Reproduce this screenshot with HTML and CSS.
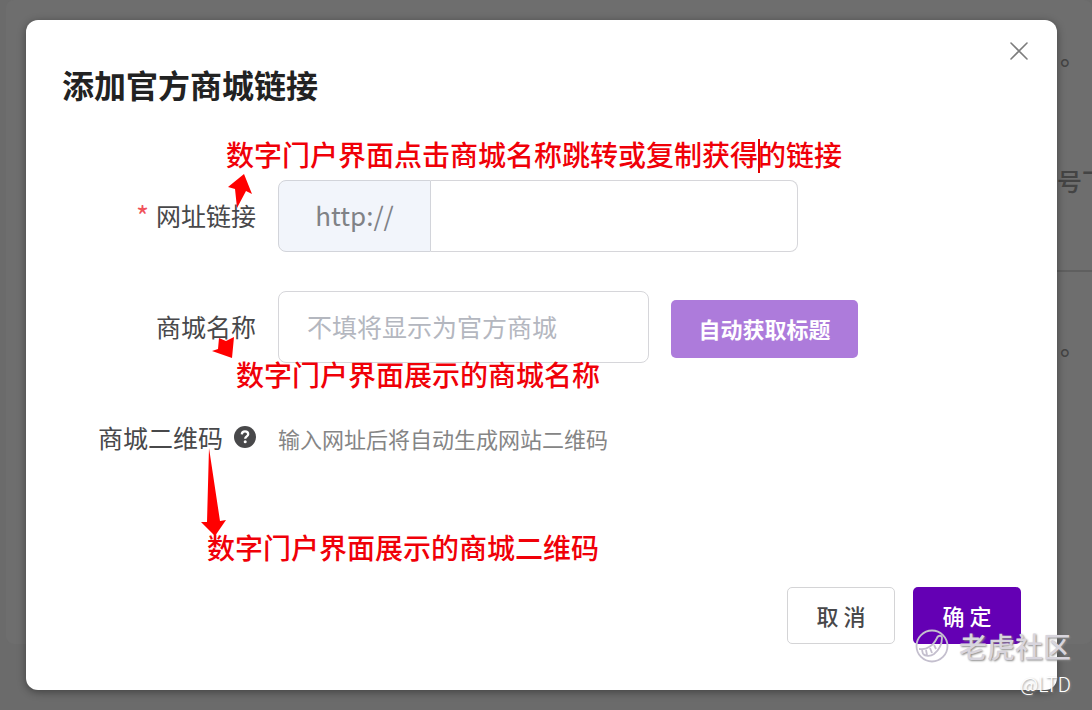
FILE: index.html
```html
<!DOCTYPE html>
<html lang="zh-CN">
<head>
<meta charset="utf-8">
<title>添加官方商城链接</title>
<link rel="stylesheet" href="styles.css">
</head>
<body>
<div class="backdrop" aria-hidden="true">
  <div class="backdrop-card">
    <p class="backdrop-line">。</p>
    <p class="backdrop-line backdrop-mid">号下</p>
    <p class="backdrop-line backdrop-last">。</p>
  </div>
</div>

<main class="dialog" role="dialog" aria-labelledby="title">
  <button class="close" type="button" aria-label="关闭">
    <svg width="20" height="20" viewBox="0 0 20 20"><path d="M2 2 18 18M18 2 2 18" fill="none" stroke="#7d7d7d" stroke-width="1.6" stroke-linecap="round"/></svg>
  </button>
  <h1 class="title" id="title">添加官方商城链接</h1>

  <form class="form">
    <div class="row">
      <label class="label" for="url"><span class="required">*</span>网址链接</label>
      <div class="group">
        <span class="prefix">http://</span>
        <input class="input" id="url" type="text">
      </div>
      <p class="note note-url">数字门户界面点击商城名称跳转或复制获得<i class="caret"></i>的链接</p>
      <svg class="arrow arrow-url" width="26" height="36" viewBox="0 0 26 36"><path d="M16 0 24 20 18 17 9 34 7 15 0 13Z" fill="#f00"/></svg>
    </div>

    <div class="row">
      <label class="label" for="name">商城名称</label>
      <div class="controls">
        <input class="input input-name" id="name" type="text" placeholder="不填将显示为官方商城">
        <button class="button fetch" type="button">自动获取标题</button>
      </div>
      <p class="note note-name">数字门户界面展示的商城名称</p>
      <svg class="arrow arrow-name" width="22" height="22" viewBox="0 0 22 22"><path d="M7 1 14 4 22 0 20 21 0 14 6 12Z" fill="#f00"/></svg>
    </div>

    <div class="row">
      <span class="label">商城二维码
        <svg class="help" width="22" height="22" viewBox="0 0 22 22" role="img" aria-label="帮助"><circle cx="11" cy="11" r="11" fill="#48484a"/><path d="M7.8 8.4C7.9 6.4 9.2 5.4 11 5.4S14.2 6.5 14.2 8.2C14.2 10.3 11.2 10.4 11.2 12.7" fill="none" stroke="#fff" stroke-width="2.3"/><circle cx="11.2" cy="15.8" r="1.5" fill="#fff"/></svg>
      </span>
      <p class="hint">输入网址后将自动生成网站二维码</p>
      <p class="note note-code">数字门户界面展示的商城二维码</p>
      <svg class="arrow arrow-code" width="26" height="88" viewBox="0 0 26 88"><path d="M8 0 19 73 25 72 14 88 0 74 6 74Z" fill="#f00"/></svg>
    </div>

    <div class="footer">
      <button class="button cancel" type="button">取 消</button>
      <button class="button confirm" type="submit">确 定</button>
    </div>
  </form>
</main>

<div class="watermark">
  <div class="brand">
    <svg width="34" height="34" viewBox="0 0 34 34"><g fill="none" stroke="#c4bfce" stroke-width="1.8"><circle cx="17" cy="17" r="15.5"/><path d="M4 20C7 20 10 21 14 18 18 16 20 13 22 9 23 6 27 6 27 9 27 15 24 21 19 25 15 28 10 27 8 25"/><path d="m7 21 1 4m3-4 1 5m3-7 2 5m2-8 2 4" stroke-width="1.8"/></g></svg>
    <span>老虎社区</span>
  </div>
  <span class="author">@LTD</span>
</div>
</body>
</html>
```
FILE: styles.css
```css
* {
  box-sizing: border-box;
}

body {
  margin: 0;
  min-height: 100vh;
  display: flex;
  position: relative;
  overflow: hidden;
  padding: 20px 35px 20px 26px;
  background: #6b6b6b;
  font-family: "Noto Sans CJK SC", sans-serif;
  color: #48484a;
}

h1, p {
  margin: 0;
  font-weight: 400;
}

button, input {
  font-family: inherit;
}

.backdrop {
  position: absolute;
  inset: 0;
  padding: 0 0 66px 6px;
}

.backdrop-card {
  height: 100%;
  display: flex;
  flex-direction: column;
  align-items: flex-end;
  overflow: hidden;
  padding-top: 34px;
  border-radius: 8px;
  background: #6e6e6e;
  color: #444;
}

.backdrop-line {
  width: 32px;
  font-size: 25px;
  font-weight: 500;
  line-height: 40px;
  white-space: nowrap;
}

.backdrop-mid {
  width: 35px;
  margin-top: 86px;
  padding-bottom: 70px;
  border-bottom: 2px solid #5f5f5f;
}

.backdrop-last {
  margin-top: 52px;
}

.dialog {
  position: relative;
  flex: 1;
  padding: 40px 36px 45px;
  border-radius: 12px;
  background: #fff;
  box-shadow: 0 2px 8px rgba(0, 0, 0, 0.4);
}

.close {
  position: absolute;
  top: 21px;
  right: 28px;
  width: 20px;
  height: 20px;
  padding: 0;
  border: 0;
  background: none;
}

.close svg {
  display: block;
}

.title {
  font-size: 32px;
  font-weight: 700;
  line-height: 48px;
  color: #222;
}

.form {
  display: flex;
  flex-direction: column;
  gap: 39px;
  margin-top: 72px;
}

.row {
  position: relative;
  display: grid;
  grid-template-columns: 194px 1fr;
  column-gap: 22px;
  align-items: center;
  min-height: 72px;
}

.label {
  display: flex;
  justify-content: flex-end;
  align-items: center;
  gap: 11px;
  padding-bottom: 2px;
  font-size: 25px;
  line-height: 36px;
  white-space: nowrap;
}

.required {
  margin-right: -4px;
  color: #f0525a;
  font-size: 28px;
}

.help {
  flex: none;
}

.group {
  display: flex;
  max-width: 520px;
}

.prefix {
  flex: none;
  width: 153px;
  height: 72px;
  border: 1px solid #d2d4da;
  border-radius: 8px 0 0 8px;
  background: #f2f5fb;
  color: #808286;
  font-size: 26px;
  line-height: 68px;
  text-align: center;
}

.input {
  flex: 1;
  min-width: 0;
  height: 72px;
  padding: 0 28px 2px;
  border: 1px solid #d6d6da;
  border-radius: 8px;
  background: #fff;
  color: #48484a;
  font-size: 25px;
}

.input::placeholder {
  color: #b4b7bf;
  opacity: 1;
}

.group .input {
  border-left: 0;
  border-radius: 0 8px 8px 0;
}

.controls {
  display: flex;
  align-items: center;
  gap: 22px;
}

.input-name {
  flex: 0 1 371px;
}

.button {
  height: 57px;
  padding: 0 0 2px;
  border: 1px solid transparent;
  border-radius: 5px;
  font-size: 22px;
  font-weight: 500;
}

.fetch {
  width: 187px;
  height: 58px;
  margin-top: 3px;
  background: #ad7bdb;
  color: #fff;
  font-weight: 700;
}

.hint {
  font-size: 22px;
  line-height: 32px;
  color: #858585;
}

.footer {
  display: flex;
  justify-content: flex-end;
  gap: 18px;
  margin-top: 74px;
}

.cancel, .confirm {
  width: 108px;
}

.cancel {
  border-color: #d4d4d6;
  background: #fff;
  color: #48484a;
}

.confirm {
  background: #6400b4;
  color: #fff;
}

.note {
  position: absolute;
  font-size: 28px;
  font-weight: 500;
  line-height: 40px;
  color: #f00008;
  white-space: nowrap;
}

.note-url {
  top: -46px;
  left: 164px;
}

.note-name {
  top: 63px;
  left: 174px;
}

.note-code {
  top: 125px;
  left: 145px;
}

.caret {
  display: inline-block;
  width: 2px;
  height: 34px;
  margin-right: -2px;
  vertical-align: -7px;
  background: #e00000;
}

.arrow {
  position: absolute;
}

.arrow-url {
  top: -6px;
  left: 166px;
}

.arrow-name {
  top: 46px;
  left: 150px;
}

.arrow-code {
  top: 46px;
  left: 139px;
}

.watermark {
  position: absolute;
  right: 21px;
  bottom: 12px;
  display: flex;
  flex-direction: column;
  align-items: flex-end;
  gap: 6px;
  color: #fff;
  text-shadow: 1px 1px 2px #888;
}

.brand {
  display: flex;
  align-items: center;
  gap: 10px;
  color: #d8d5dd;
  font-size: 28px;
  font-weight: 500;
  line-height: 36px;
}

.author {
  font-size: 20px;
  font-weight: 300;
  line-height: 28px;
}
```
